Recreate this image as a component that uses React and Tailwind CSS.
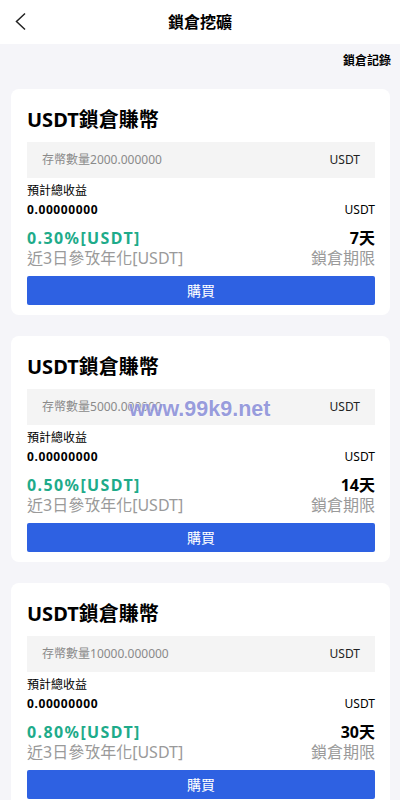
const plans = [
  { amount: "2000.000000", rate: "0.30%", days: "7天" },
  { amount: "5000.000000", rate: "0.50%", days: "14天" },
  { amount: "10000.000000", rate: "0.80%", days: "30天" },
];

const font = { fontFamily: '"Noto Sans", "Noto Sans CJK TC", sans-serif' };

const PlanCard = ({ amount, rate, days }) => (
  <div className="mx-[11px] mr-[10px] rounded-[8px] bg-white px-[16px] pr-[15px] pt-[17px] pb-[10px]">
    <h2 className="text-[20px] leading-[28px] font-bold text-black">USDT鎖倉賺幣</h2>
    <div className="mt-[8px] h-[36px] bg-[#f4f4f4] flex items-center justify-between px-[15px]">
      <span className="text-[12px] text-[#8a8a8a]">存幣數量{amount}</span>
      <span className="text-[12px] text-[#222]">USDT</span>
    </div>
    <p className="mt-[5px] text-[12px] leading-[16px] text-black">預計總收益</p>
    <div className="mt-[3px] flex items-center justify-between text-[12px] leading-[16px] text-black">
      <span className="font-bold tracking-[0.6px]">0.00000000</span>
      <span>USDT</span>
    </div>
    <div className="mt-[10px] flex justify-between items-end">
      <div>
        <p className="text-[16px] leading-[20px] font-bold text-[#1eab8a] tracking-[1.4px]">{rate}[USDT]</p>
        <p className="text-[16px] leading-[20px] text-[#9a9a9a]">近3日參攷年化[USDT]</p>
      </div>
      <div className="text-right">
        <p className="text-[16px] leading-[20px] font-bold text-black">{days}</p>
        <p className="text-[16px] leading-[20px] text-[#9a9a9a]">鎖倉期限</p>
      </div>
    </div>
    <button className="mt-[8px] w-full h-[29px] rounded-[2px] bg-[#2e61e2] text-white text-[14px]">購買</button>
  </div>
);

export default function App() {
  return (
    <div className="relative min-h-[800px] bg-[#f5f5f9]" style={font}>
      {/* header */}
      <div className="relative h-[44px] bg-white flex items-center justify-center">
        <svg className="absolute left-[14px] top-[12px]" width="14" height="19" viewBox="0 0 14 19" fill="none">
          <path d="M11 1.5 L2.5 9.5 L11 17.5" stroke="#222" strokeWidth="1.5" />
        </svg>
        <h1 className="text-[16px] font-semibold text-black">鎖倉挖礦</h1>
      </div>
      <div className="h-[45px] flex items-center justify-end pr-[9px] pb-[11px]">
        <span className="text-[12px] font-semibold text-black">鎖倉記錄</span>
      </div>
      <div className="flex flex-col gap-[21px] pb-[20px]">
        {plans.map((p) => (
          <PlanCard key={p.amount} {...p} />
        ))}
      </div>
      {/* watermark */}
      <div
        className="absolute left-[129px] top-[396px] text-[21.5px] leading-[26px] font-bold text-[#8f93da] pointer-events-none"
        style={{ fontFamily: '"Liberation Sans", sans-serif', WebkitTextStroke: "0.8px #ffffff", paintOrder: "stroke fill", opacity: 0.9 }}
      >
        www.99k9.net
      </div>
    </div>
  );
}
